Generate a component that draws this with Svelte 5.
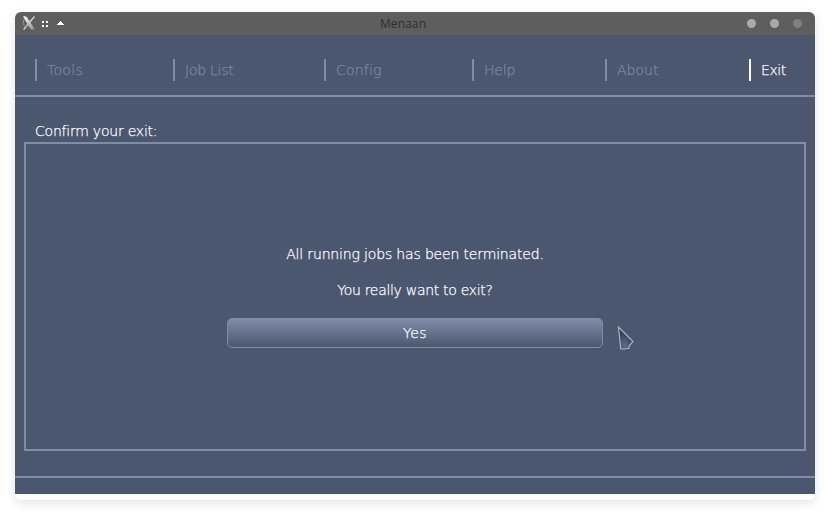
<script>
  const tabs = [
    { label: 'Tools', tracking: 0.3 },
    { label: 'Job List', tracking: -0.25 },
    { label: 'Config', tracking: 0.2 },
    { label: 'Help', tracking: -0.2 },
    { label: 'About', tracking: 0 },
    { label: 'Exit', tracking: -0.45 }
  ];
  let active = $state('Exit');
</script>

<div class="desktop">
  <div class="window">
    <header class="titlebar">
      <svg class="marks" width="50" height="18" viewBox="0 0 50 18">
        <defs>
          <linearGradient id="metal" x1="0" y1="0" x2="1" y2="1">
            <stop offset="0" stop-color="#fff" />
            <stop offset="0.5" stop-color="#c8c8c8" />
            <stop offset="1" stop-color="#858585" />
          </linearGradient>
        </defs>
        <path d="M1 1.5Q3.5 0.5 5.2 2.5L13 14.5H9.2Q6.5 11.5 4.5 7.5Z" fill="url(#metal)" />
        <path d="M12.5 1.5L7.4 7.5M6.2 9L1.6 14.5" stroke="#d8d8d8" stroke-width="1.3" />
        <path d="M2 4.5Q-0.5 9 3 11.5Q5 12 7 9" fill="none" stroke="#999" stroke-width="1" />
        <path d="M20 6h2v2h-2zM24 6h2v2h-2zM20 10h2v2h-2zM24 10h2v2h-2z" fill="#fff" />
        <path d="M38 6h1v1h1v1h1v1h1v1h-7v-1h1v-1h1v-1h1z" fill="#fff" />
      </svg>
      <span class="title">Menaan</span>
      <div class="controls"><i></i><i></i><i class="dim"></i></div>
    </header>
    <main>
      <nav>
        {#each tabs as tab}
          <button
            class="tab"
            class:active={tab.label === active}
            style:letter-spacing="{tab.tracking}px"
            onclick={() => (active = tab.label)}
          >{tab.label}</button>
        {/each}
      </nav>
      <section>
        <h1>Confirm your exit:</h1>
        <div class="panel">
          <p class="first">All running jobs has been terminated.</p>
          <p>You really want to exit?</p>
          <button class="yes">Yes</button>
        </div>
      </section>
      <footer></footer>
    </main>
  </div>
  <svg class="cursor" width="20" height="26" viewBox="0 0 20 26">
    <defs>
      <radialGradient id="pointer" cx="0.4" cy="0.85" r="0.65">
        <stop offset="0" stop-color="#5d6b8c" />
        <stop offset="1" stop-color="#343c4e" />
      </radialGradient>
    </defs>
    <path d="M2.5 2L17 16.5L13 21V23.5H10L9 24H4.7Z" fill="url(#pointer)" stroke="#a9b0c2" stroke-width="1.2" />
  </svg>
</div>

<style>
  :global(body) { background: #fff; }
  .desktop {
    position: relative;
    box-sizing: border-box;
    width: 830px;
    height: 518px;
    padding: 12px 15px 18px;
    overflow: hidden;
    background: #fff;
    font: 200 14px/18px "DejaVu Sans", sans-serif;
  }
  .window {
    height: 488px;
    border-radius: 6px;
    overflow: hidden;
    background: #fff;
    box-shadow: 0 3px 11px rgba(0, 0, 0, 0.11);
  }
  .titlebar {
    display: grid;
    grid-template-columns: 1fr auto 1fr;
    align-items: center;
    height: 23px;
    background: #5e5e5e;
  }
  .marks { margin-left: 7px; }
  .title {
    padding-right: 24px;
    color: #303030;
    font-family: "Open Sans", sans-serif;
    font-size: 12px;
    font-weight: 400;
    line-height: 16px;
    letter-spacing: 0.1px;
  }
  .controls {
    display: flex;
    justify-content: flex-end;
    gap: 14px;
    padding-right: 13px;
  }
  .controls i {
    width: 9px;
    height: 9px;
    border-radius: 50%;
    background: #aaa;
  }
  .controls .dim { background: #808080; }
  main {
    display: flex;
    flex-direction: column;
    height: 459px;
    background: #4b566f;
  }
  nav {
    display: grid;
    grid-template-columns: 138px 151px 148px 133px 144px 1fr;
    box-sizing: border-box;
    height: 62px;
    padding: 24px 0 0 20px;
    border-bottom: 2px solid #808ca8;
  }
  button { font: inherit; }
  .tab, h1, p, .yes { -webkit-text-stroke: 0.25px currentColor; }
  .tab {
    height: 22px;
    padding: 0 0 0 10px;
    border: 0;
    border-left: 2px solid #808ca8;
    background: none;
    color: #7c87a3;
    text-align: left;
    white-space: nowrap;
  }
  .active {
    border-color: #fff;
    color: #fff;
  }
  section {
    display: flex;
    flex-direction: column;
    flex: 1;
    padding: 25px 9px;
    color: #fff;
  }
  h1 {
    margin: 0 0 2px 11px;
    font: inherit;
    letter-spacing: -0.22px;
  }
  .panel {
    display: flex;
    flex: 1;
    flex-direction: column;
    align-items: center;
    border: 2px solid #808ca8;
  }
  p {
    margin: 0;
    letter-spacing: -0.3px;
  }
  .first {
    margin: 101px 0 18px;
    letter-spacing: -0.16px;
  }
  .yes {
    box-sizing: border-box;
    width: 376px;
    height: 30px;
    margin-top: 19px;
    padding: 0;
    border: 1px solid #808ca8;
    border-radius: 5px;
    background: linear-gradient(#808ca8, #4b566f);
    color: #fff;
    letter-spacing: 0.5px;
  }
  footer {
    box-sizing: border-box;
    height: 18px;
    border-top: 2px solid #808ca8;
  }
  .cursor {
    position: absolute;
    left: 616px;
    top: 325px;
  }
</style>
